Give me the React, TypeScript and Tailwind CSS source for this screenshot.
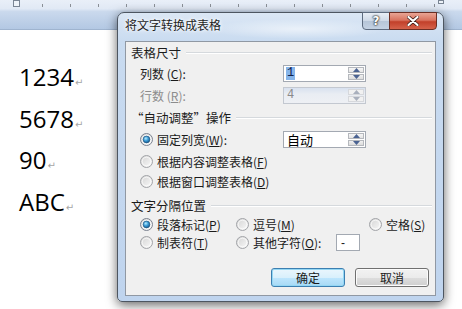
import React from "react";

const cjk = "font-['Microsoft_YaHei','Noto_Sans_CJK_SC',sans-serif]";

function Radio({ checked }: { checked?: boolean }) {
  return (
    <svg width="13" height="13" viewBox="0 0 13 13" className="shrink-0">
      <defs>
        <linearGradient id="rbg" x1="0" y1="0" x2="1" y2="1">
          <stop offset="0" stopColor="#d2d2d2" />
          <stop offset="1" stopColor="#fbfbfb" />
        </linearGradient>
        <radialGradient id="rdot" cx="0.4" cy="0.35" r="0.75">
          <stop offset="0" stopColor="#b6ecff" />
          <stop offset="0.45" stopColor="#3a9bd6" />
          <stop offset="1" stopColor="#0e4a7c" />
        </radialGradient>
      </defs>
      <circle cx="6.5" cy="6.5" r="6" fill="url(#rbg)" stroke={checked ? "#7a8290" : "#a2a4a8"} strokeWidth="1" />
      <circle cx="6.5" cy="6.5" r="4.3" fill="none" stroke="#ffffff" strokeOpacity="0.7" strokeWidth="1" />
      {checked && <circle cx="6.5" cy="6.5" r="3.4" fill="url(#rdot)" stroke="#1d4f7a" strokeWidth="0.6" />}
    </svg>
  );
}

function Arrows({ disabled }: { disabled?: boolean }) {
  const c = disabled ? "#a9b0bd" : "#4b6392";
  return (
    <div className="flex w-[17px] flex-col gap-px py-px pr-px">
      <div className={`flex flex-1 items-center justify-center border ${disabled ? "border-[#d6d8dc] bg-[#f1f1f1]" : "border-[#b5b8bd] bg-[linear-gradient(180deg,#f7f7f7,#e4e4e4)]"}`}>
        <svg width="7" height="4" viewBox="0 0 7 4"><path d="M0 4 L3.5 0 L7 4 Z" fill={c} /></svg>
      </div>
      <div className={`flex flex-1 items-center justify-center border ${disabled ? "border-[#d6d8dc] bg-[#f1f1f1]" : "border-[#b5b8bd] bg-[linear-gradient(180deg,#f0f0f0,#dcdcdc)]"}`}>
        <svg width="7" height="4" viewBox="0 0 7 4"><path d="M0 0 L7 0 L3.5 4 Z" fill={c} /></svg>
      </div>
    </div>
  );
}

function GroupHeader({ children }: { children: React.ReactNode }) {
  return (
    <div className="flex h-[20px] items-center pl-[5px] pr-[3px]">
      <span className="text-[12.5px] leading-[16px] text-[#1b1b1b]">{children}</span>
      <div className="ml-[5px] flex-1 border-t border-b border-t-[#d5d9dd] border-b-white" />
    </div>
  );
}

export default function App() {
  const ticks = Array.from({ length: 16 }, (_, i) => 14 + i * 28);
  return (
    <div className="relative h-[309px] w-[462px] overflow-hidden bg-white">
      {/* ruler band */}
      <div className="relative h-[30px] w-full bg-[linear-gradient(180deg,#e9eff8_0%,#e1e9f5_30%,#cad9ed_40%,#b3c8e3_100%)] border-b border-[#9fb4cf]">
        {ticks.map((x) => (
          <div key={x} className="absolute top-[4px] h-[3px] w-px bg-[#8a8f96]" style={{ left: x }} />
        ))}
        <div className="absolute left-[13px] top-0 h-[7px] w-[7px] border border-[#7a8594] bg-[#eef3f9]" />
        <div className="absolute left-[438px] top-0 h-[4px] w-[6px] border border-[#7a8594] bg-[#eef3f9]" />
      </div>

      {/* document text */}
      <div className="pl-[19px] pt-[26px] font-['Open_Sans',sans-serif] text-[24px] leading-[41.7px] text-black">
        {["1234", "5678", "90", "ABC"].map((t) => (
          <div key={t} className="h-[41.7px]">
            {t}
            <span className="ml-[1px] font-['DejaVu_Sans',sans-serif] text-[10px] leading-none text-[#a6a6a6]">↵</span>
          </div>
        ))}
      </div>

      {/* dialog window */}
      <div
        className={`absolute left-[117px] top-[12px] flex h-[290px] w-[327px] flex-col rounded-t-[7px] rounded-b-[5px] border border-[#4d5661] bg-[linear-gradient(180deg,#dbe7f5_0%,#c9dbf0_10%,#bfd4ee_100%)] shadow-[0_3px_11px_rgba(0,0,0,0.6)] ${cjk}`}
      >
        {/* title bar */}
        <div className="relative flex h-[28px] items-start rounded-t-[6px] bg-[radial-gradient(ellipse_90px_10px_at_180px_16px,rgba(255,255,255,0.55),rgba(255,255,255,0))]">
          <span className="pl-[7px] pt-[4px] text-[12px] leading-[16px] text-[#1e1e1e] [text-shadow:0_0_5px_#ffffff,0_0_3px_#ffffff]">
            将文字转换成表格
          </span>
          <div className="ml-auto mr-[6px] flex h-[18px] -mt-px">
            <div className="flex h-full w-[28px] items-center justify-center rounded-bl-[4px] border border-[#5d6b7f] bg-[linear-gradient(180deg,#e8eef6_0%,#cdd8e6_50%,#b6c5d8_51%,#c4d2e3_100%)]">
              <span className="font-['DejaVu_Sans',sans-serif] text-[12px] font-bold leading-none text-white [text-shadow:0_0_1px_#333,0_0_2px_#333,0_0_2px_#333]">?</span>
            </div>
            <div className="-ml-px flex h-full w-[48px] items-center justify-center rounded-br-[4px] border border-[#6b2e24] bg-[linear-gradient(180deg,#e9a595_0%,#d9735f_45%,#c2402a_55%,#d5624b_100%)]">
              <svg width="12" height="10" viewBox="0 0 12 10">
                <path d="M1.5 1 L10.5 9 M10.5 1 L1.5 9" stroke="#3a1a14" strokeWidth="3.6" strokeLinecap="round" />
                <path d="M1.5 1 L10.5 9 M10.5 1 L1.5 9" stroke="#ffffff" strokeWidth="2.2" strokeLinecap="round" />
              </svg>
            </div>
          </div>
        </div>

        {/* client area */}
        <div className="ml-[7px] flex h-[255px] w-[311px] flex-col border border-[#9098a3] bg-[#f0f0f0] text-[12px] leading-[16px] text-[#1b1b1b]">
          <div className="mt-[1px]">
            <GroupHeader>表格尺寸</GroupHeader>
          </div>
          <div className="mt-[2px] flex h-[17px] items-center pl-[14px]">
            <span className="w-[143px]">
              列数 (<u>C</u>):
            </span>
            <div className="flex h-[17px] w-[83px] border border-[#a3a9b2] bg-white">
              <div className="flex flex-1 items-center pl-[2px]">
                <span className="bg-[#86b5ea] px-px font-['Liberation_Mono',monospace] text-[12px] leading-[13px] text-[#10204a]">1</span>
              </div>
              <Arrows />
            </div>
          </div>
          <div className="mt-[5px] flex h-[17px] items-center pl-[14px] text-[#8c8c8c]">
            <span className="w-[143px]">
              行数 (<u>R</u>):
            </span>
            <div className="flex h-[17px] w-[83px] border border-[#c3c8d0] bg-[linear-gradient(180deg,#d8e1ef,#e9edf3_40%,#eef0f4)]">
              <div className="flex flex-1 items-center pl-[3px]">
                <span className="font-['Liberation_Mono',monospace] text-[12px] leading-[13px] text-[#8a8a8a]">4</span>
              </div>
              <Arrows disabled />
            </div>
          </div>

          <div className="mt-[4px]">
            <GroupHeader>“自动调整”操作</GroupHeader>
          </div>
          <div className="mt-[3px] flex h-[17px] items-center pl-[14px]">
            <div className="flex w-[143px] items-center gap-[4px]">
              <Radio checked />
              <span>
                固定列宽(<u>W</u>):
              </span>
            </div>
            <div className="flex h-[17px] w-[83px] border border-[#a3a9b2] bg-white">
              <div className="flex flex-1 items-center pl-[3px]">
                <span className="text-[13px] leading-[14px] text-black">自动</span>
              </div>
              <Arrows />
            </div>
          </div>
          <div className="mt-[5px] flex h-[17px] items-center gap-[4px] pl-[14px]">
            <Radio />
            <span>
              根据内容调整表格(<u>F</u>)
            </span>
          </div>
          <div className="mt-[3px] flex h-[17px] items-center gap-[4px] pl-[14px]">
            <Radio />
            <span>
              根据窗口调整表格(<u>D</u>)
            </span>
          </div>

          <div className="mt-[6px]">
            <GroupHeader>文字分隔位置</GroupHeader>
          </div>
          <div className="flex h-[17px] items-center pl-[14px]">
            <div className="flex w-[96px] items-center gap-[4px]">
              <Radio checked />
              <span>
                段落标记(<u>P</u>)
              </span>
            </div>
            <div className="flex w-[133px] items-center gap-[4px]">
              <Radio />
              <span>
                逗号(<u>M</u>)
              </span>
            </div>
            <div className="flex items-center gap-[4px]">
              <Radio />
              <span>
                空格(<u>S</u>)
              </span>
            </div>
          </div>
          <div className="mt-[1px] flex h-[17px] items-center pl-[14px]">
            <div className="flex w-[96px] items-center gap-[4px]">
              <Radio />
              <span>
                制表符(<u>T</u>)
              </span>
            </div>
            <div className="flex w-[100px] items-center gap-[4px]">
              <Radio />
              <span>
                其他字符(<u>O</u>):
              </span>
            </div>
            <div className="flex h-[17px] w-[24px] items-center border border-[#a3a9b2] bg-white pl-[4px]">
              <span className="font-['Liberation_Sans',sans-serif] text-[12px] leading-none">-</span>
            </div>
          </div>

          <div className="mt-[17px] flex justify-end gap-[10px] pr-[6px]">
            <div className="flex h-[19px] w-[74px] items-center justify-center rounded-[3px] border border-[#3c7fb1] bg-[linear-gradient(180deg,#eaf6fd_0%,#d9f0fc_50%,#bee6fd_51%,#a7d9f5_100%)] shadow-[inset_0_0_0_1px_#94d7f4]">
              <span className="text-[12px] leading-none">确定</span>
            </div>
            <div className="flex h-[19px] w-[74px] items-center justify-center rounded-[3px] border border-[#707070] bg-[linear-gradient(180deg,#f2f2f2_0%,#ebebeb_50%,#dddddd_51%,#cfcfcf_100%)] shadow-[inset_0_0_0_1px_#fcfcfc]">
              <span className="text-[12px] leading-none">取消</span>
            </div>
          </div>
        </div>
      </div>
    </div>
  );
}
